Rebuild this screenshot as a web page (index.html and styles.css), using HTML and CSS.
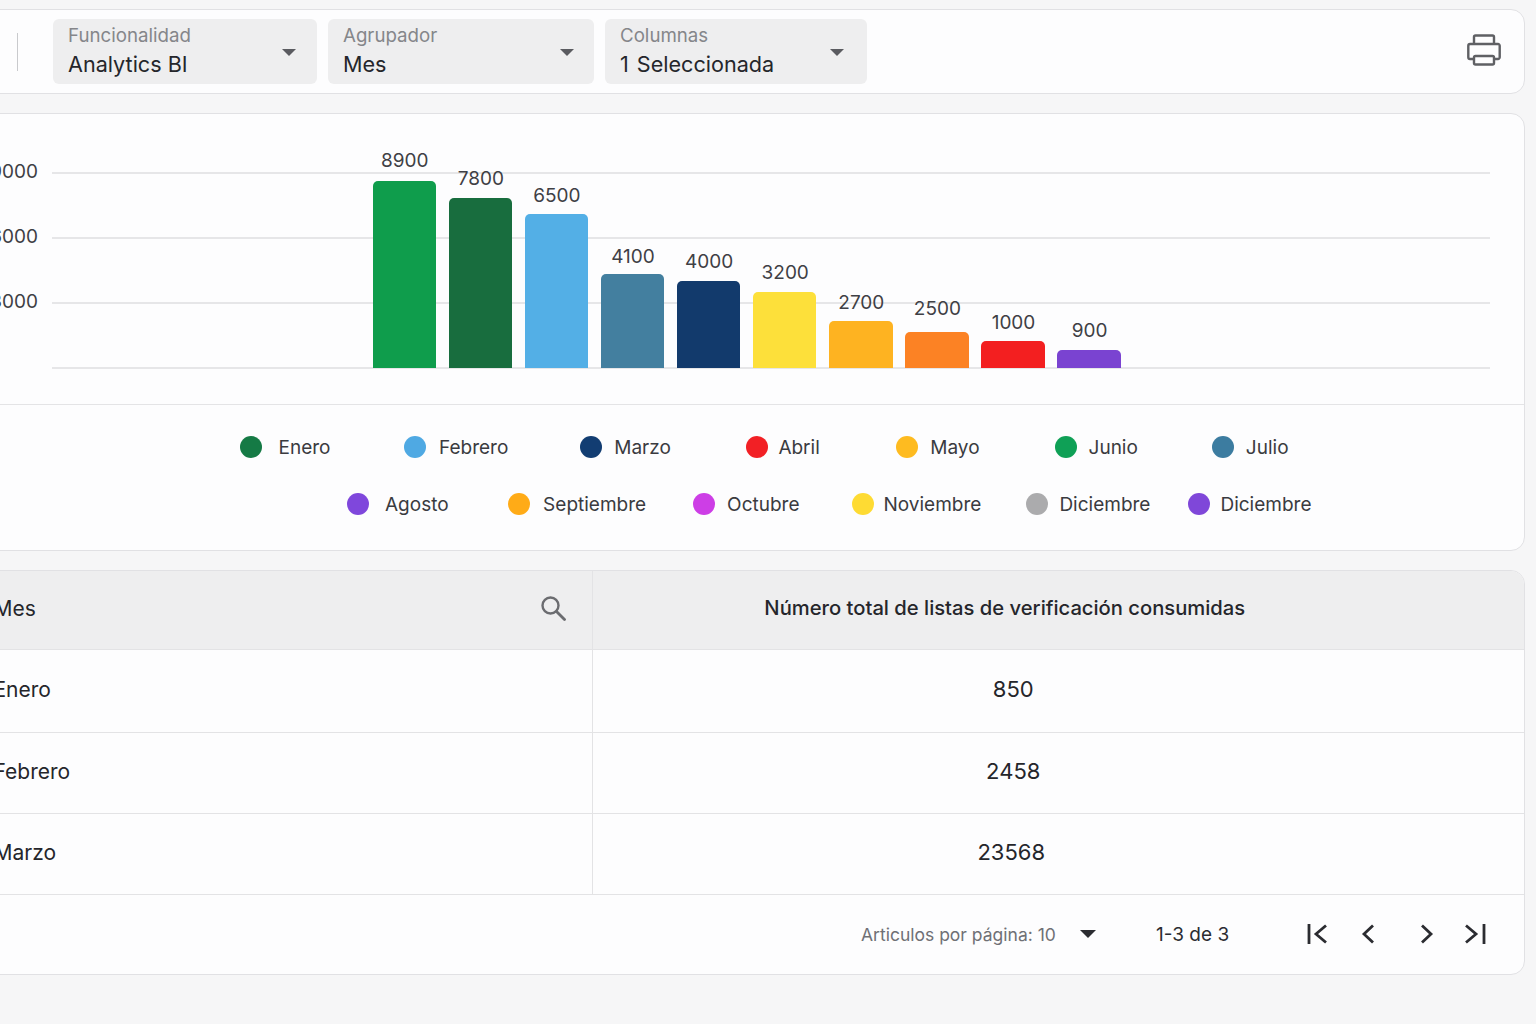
FILE: index.html
```html
<!DOCTYPE html>
<html lang="es">
<head>
<meta charset="utf-8">
<title>Analytics BI</title>
<link rel="stylesheet" href="styles.css">
</head>
<body>
<main class="page">
  <section class="card toolbar">
    <span class="divider"></span>
    <div class="select s1"><div class="select-text"><span class="select-label">Funcionalidad</span><span class="select-value">Analytics BI</span></div><span class="caret"></span></div>
    <div class="select s2"><div class="select-text"><span class="select-label">Agrupador</span><span class="select-value">Mes</span></div><span class="caret"></span></div>
    <div class="select s3"><div class="select-text"><span class="select-label">Columnas</span><span class="select-value">1 Seleccionada</span></div><span class="caret"></span></div>
    <svg class="printer" viewBox="0 0 34 32" fill="none" stroke="#5f6064" stroke-width="2.4" stroke-linejoin="round"><path d="M7 10V3a1.5 1.5 0 0 1 1.5-1.5h17A1.5 1.5 0 0 1 27 3v7"/><path d="M7 25H3a1.7 1.7 0 0 1-1.7-1.7V11.700A1.7 1.7 0 0 1 3 10h28a1.7 1.7 0 0 1 1.7 1.700V23.300A1.7 1.700 0 0 1 31 25h-4"/><rect x="7" y="22" width="20" height="8.500" rx="1.500"/></svg>
  </section>

  <section class="card chart-card">
    <div class="plot">
      <div class="grid">
        <div class="grid-row"><span class="tick">9000</span><span class="line"></span></div>
        <div class="grid-row"><span class="tick">6000</span><span class="line"></span></div>
        <div class="grid-row"><span class="tick">3000</span><span class="line"></span></div>
        <div class="grid-row"><span class="tick"></span><span class="line"></span></div>
      </div>
      <div class="bars">
        <div class="bar-col"><span class="bar-value m8">8900</span><div class="bar" style="height:187px;background:#0f9d4c"></div></div>
        <div class="bar-col"><span class="bar-value m7">7800</span><div class="bar" style="height:170px;background:#186d3e"></div></div>
        <div class="bar-col"><span class="bar-value m6">6500</span><div class="bar" style="height:154px;background:#53afe6"></div></div>
        <div class="bar-col"><span class="bar-value m5">4100</span><div class="bar" style="height:94px;background:#437f9f"></div></div>
        <div class="bar-col"><span class="bar-value m7">4000</span><div class="bar" style="height:87px;background:#123a6c"></div></div>
        <div class="bar-col"><span class="bar-value m7">3200</span><div class="bar" style="height:76px;background:#fde03a"></div></div>
        <div class="bar-col"><span class="bar-value m6">2700</span><div class="bar" style="height:47px;background:#feb321"></div></div>
        <div class="bar-col"><span class="bar-value m11">2500</span><div class="bar" style="height:36px;background:#fc8224"></div></div>
        <div class="bar-col"><span class="bar-value m6">1000</span><div class="bar" style="height:27px;background:#f31f20"></div></div>
        <div class="bar-col"><span class="bar-value m7">900</span><div class="bar" style="height:18px;background:#7a43d1"></div></div>
      </div>
    </div>
    <div class="legend">
      <div class="legend-row r1">
        <div class="item"><i class="dot" style="background:#157a45"></i>Enero</div>
        <div class="item"><i class="dot" style="background:#4fa9e3"></i>Febrero</div>
        <div class="item"><i class="dot" style="background:#123d72"></i>Marzo</div>
        <div class="item"><i class="dot" style="background:#f22025"></i>Abril</div>
        <div class="item"><i class="dot" style="background:#febb20"></i>Mayo</div>
        <div class="item"><i class="dot" style="background:#0fa056"></i>Junio</div>
        <div class="item"><i class="dot" style="background:#3c7ca0"></i>Julio</div>
      </div>
      <div class="legend-row r2">
        <div class="item"><i class="dot" style="background:#7f47dc"></i>Agosto</div>
        <div class="item"><i class="dot" style="background:#ffab17"></i>Septiembre</div>
        <div class="item"><i class="dot" style="background:#cd3ee6"></i>Octubre</div>
        <div class="item"><i class="dot" style="background:#fedb33"></i>Noviembre</div>
        <div class="item"><i class="dot" style="background:#ababad"></i>Diciembre</div>
        <div class="item"><i class="dot" style="background:#7f47d9"></i>Diciembre</div>
      </div>
    </div>
  </section>

  <section class="card table-card">
    <div class="row head">
      <div class="cell first">Mes<svg class="search" viewBox="0 0 26 26" fill="none" stroke="#6b6c70" stroke-width="2.400"><circle cx="10.500" cy="10.500" r="8"/><path d="M16.500 16.500l8 8" stroke-linecap="round" stroke-width="2.800"/></svg></div>
      <div class="cell num head-num">Número total de listas de verificación consumidas</div>
    </div>
    <div class="row r-a"><div class="cell first">Enero</div><div class="cell num">850</div></div>
    <div class="row r-b"><div class="cell first">Febrero</div><div class="cell num">2458</div></div>
    <div class="row r-c"><div class="cell first">Marzo</div><div class="cell num wide-num">23568</div></div>
    <div class="pager">
      <span class="per-page">Articulos por página: 10</span>
      <span class="pager-caret"></span>
      <span class="range">1-3 de 3</span>
      <svg class="pg p-first" viewBox="0 0 22 22"><path d="M2 1v20M19 2.500 9 11l10 8.500"/></svg>
      <svg class="pg p-prev" viewBox="0 0 14 22"><path d="M12 2.500 3 11l9 8.500"/></svg>
      <svg class="pg p-next" viewBox="0 0 14 22"><path d="M2 2.500l9 8.500-9 8.500"/></svg>
      <svg class="pg p-last" viewBox="0 0 22 22"><path d="M20 1v20M2 2.500 12 11 2 19.500"/></svg>
    </div>
  </section>
</main>
</body>
</html>
```

FILE: styles.css
```css
* { box-sizing: border-box; }
html, body { margin: 0; height: 100%; overflow: hidden; }
body {
  background: #f6f6f7;
  color: #25262b;
  font-family: Inter, Roboto, "Liberation Sans", sans-serif;
}
.page {
  width: 1556px;
  margin-left: -20px;
  padding: 9px 11px 0 0;
  display: flex;
  flex-direction: column;
  gap: 19px;
}
.card {
  background: #fdfdfe;
  border: 1.5px solid #e1e1e4;
  border-radius: 14px;
}

/* toolbar */
.toolbar {
  height: 85px;
  display: flex;
  align-items: center;
  padding-left: 35.500px;
}
.divider { width: 1.500px; height: 38px; background: #c9cacd; margin-right: 35px; }
.select {
  height: 65px;
  background: #eeeeef;
  border-radius: 6px;
  margin-right: 11px;
  display: flex;
  align-items: center;
  justify-content: space-between;
  padding-left: 15px;
}
.s1 { width: 264px; padding-right: 21px; }
.s2 { width: 266px; padding-right: 20px; }
.s3 { width: 262px; padding-right: 23px; }
.s3 .select-value { word-spacing: 2px; }
.select-text { display: flex; flex-direction: column; padding-top: 1px; }
.select-label { font-size: 18.700px; line-height: 23px; color: #85868a; }
.select-value { font-size: 21.600px; line-height: 34px; color: #25262b; }
.caret {
  width: 0; height: 0;
  margin-top: 2px;
  border-left: 7.500px solid transparent;
  border-right: 7.500px solid transparent;
  border-top: 7px solid #5a5b60;
}
.printer { width: 34px; height: 32px; margin-left: auto; margin-right: 23px; margin-bottom: 4px; }

/* chart */
.chart-card { height: 438px; display: flex; flex-direction: column; }
.plot { position: relative; height: 291px; border-bottom: 1.500px solid #e4e4e6; flex: none; }
.grid {
  position: absolute;
  left: 0; right: 34px; top: 58px;
  height: 196.500px;
  display: flex;
  flex-direction: column;
  justify-content: space-between;
}
.grid-row { display: flex; align-items: center; height: 1.500px; }
.tick { width: 71px; flex: none; font-size: 19px; text-align: right; padding-right: 14px; color: #3f4045; position: relative; top: -1px; }
.line { flex: 1; height: 1.500px; background: #e6e6e8; }
.bars {
  position: absolute;
  left: 391.500px; top: 0;
  height: 253.500px;
  display: flex;
  align-items: flex-end;
  gap: 12.600px;
}
.bar-col { width: 63.500px; display: flex; flex-direction: column; align-items: center; }
.bar-value { font-size: 19px; line-height: 24px; color: #3f4045; white-space: nowrap; padding-left: 1px; }
.m5 { margin-bottom: 5px; }
.m6 { margin-bottom: 6px; }
.m7 { margin-bottom: 7px; }
.m8 { margin-bottom: 8px; }
.m11 { margin-bottom: 11px; }
.bar { width: 100%; border-radius: 5px 5px 0 0; }

.legend { flex: 1; padding-top: 25px; }
.legend-row { display: flex; height: 57px; align-items: flex-start; font-size: 19px; color: #3a3b40; }
.r1 { padding-left: 258.500px; }
.r2 { padding-left: 366px; }
.item { display: flex; align-items: center; height: 34px; gap: 12px; white-space: nowrap; }
.dot { display: block; width: 22px; height: 22px; border-radius: 50%; flex: none; }
.r1 .item:nth-child(1) { gap: 17px; }
.r1 .item:nth-child(2) { margin-left: 74px; gap: 12.500px; }
.r1 .item:nth-child(3) { margin-left: 72px; }
.r1 .item:nth-child(4) { margin-left: 75px; gap: 10.500px; }
.r1 .item:nth-child(5) { margin-left: 76.500px; }
.r1 .item:nth-child(6) { margin-left: 75px; }
.r1 .item:nth-child(7) { margin-left: 74.500px; gap: 11.500px; }
.r2 .item:nth-child(1) { gap: 16px; }
.r2 .item:nth-child(2) { margin-left: 59.500px; gap: 13px; }
.r2 .item:nth-child(3) { margin-left: 47px; }
.r2 .item:nth-child(4) { margin-left: 52px; gap: 10px; }
.r2 .item:nth-child(5) { margin-left: 45px; gap: 11px; }
.r2 .item:nth-child(6) { margin-left: 38px; gap: 10px; }

/* table */
.table-card { height: 405px; overflow: hidden; }
.row { display: flex; height: 81px; border-bottom: 1.500px solid #e3e3e5; font-size: 22px; }
.row.head { height: 79px; background: #eeeeef; font-size: 20.200px; font-weight: 500; }
.row.r-a { height: 83px; }
.cell { display: flex; align-items: center; padding-bottom: 5px; }
.first {
  width: 611.500px;
  flex: none;
  padding: 0 26px 4px 12.500px;
  border-right: 1.500px solid #e3e3e5;
  justify-content: space-between;
  font-size: 21px;
  font-weight: 400;
}
.num { flex: 1; justify-content: center; padding-right: 90px; }
.head-num { padding-right: 107px; }
.wide-num { padding-right: 94px; }
.search { width: 26px; height: 26px; }
.pager { height: 78px; display: flex; align-items: center; padding-left: 880px; }
.per-page { font-size: 17.500px; color: #6f7075; width: 219px; flex: none; }
.pager-caret {
  width: 0; height: 0;
  border-left: 8.500px solid transparent;
  border-right: 8.500px solid transparent;
  border-top: 8px solid #2b2c31;
  margin-right: 60px;
}
.range { font-size: 19px; width: 151px; flex: none; color: #2b2c31; }
.pg { height: 22px; fill: none; stroke: #2b2c31; stroke-width: 2.800; flex: none; }
.p-first { width: 22px; margin-right: 32px; }
.p-prev { width: 14px; margin-right: 45px; }
.p-next { width: 14px; margin-right: 30px; }
.p-last { width: 22px; }
```
